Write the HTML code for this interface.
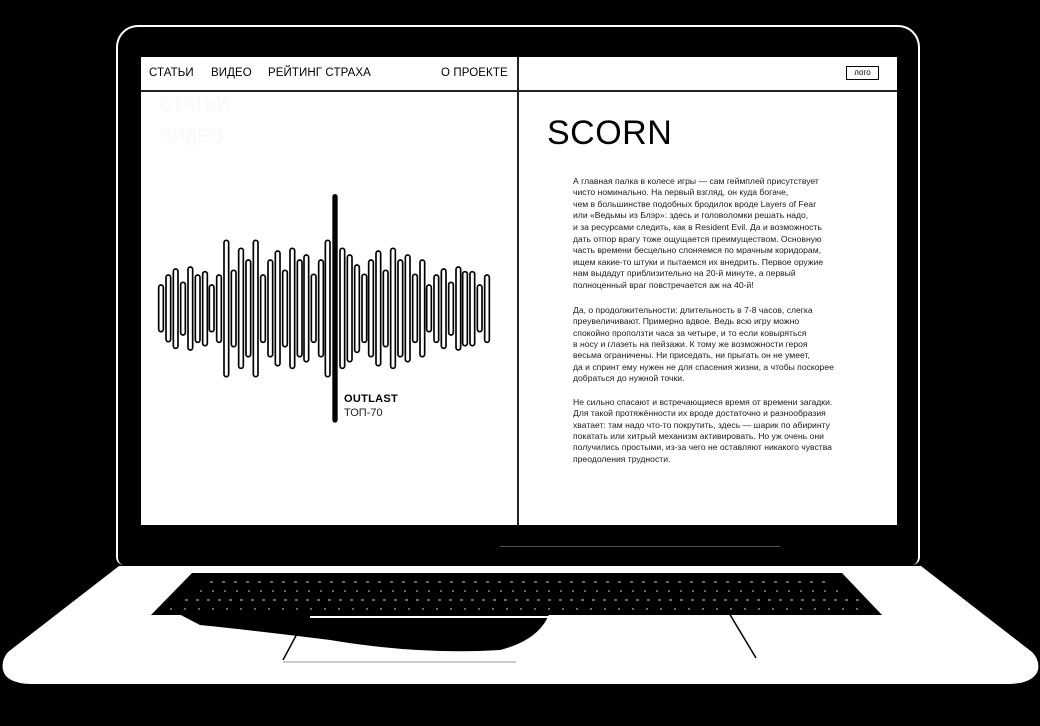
<!DOCTYPE html>
<html><head><meta charset="utf-8"><style>
html,body{margin:0;padding:0;background:#000;}
body{width:1040px;height:726px;position:relative;overflow:hidden;font-family:"Liberation Sans","DejaVu Sans",sans-serif;}
.a{position:absolute;}
.lid{left:116px;top:25px;width:800px;height:538px;border:2px solid #fff;border-radius:22px 22px 8px 8px;border-bottom:none;}
.screen{left:141px;top:57px;width:756px;height:468px;background:#fff;}
.nav{font-size:11.5px;color:#000;top:67px;letter-spacing:0.1px;}
.t{position:absolute;left:573px;font-size:8.6px;color:#1a1a1a;white-space:nowrap;line-height:10px;}
</style></head><body>
<div class="a lid"></div>
<div class="a screen"></div>
<div class="a" style="left:141px;top:90px;width:756px;height:2px;background:#222"></div>
<div class="a" style="left:517px;top:57px;width:2px;height:468px;background:#222"></div>
<div class="a nav" style="left:149px">СТАТЬИ</div>
<div class="a nav" style="left:211px">ВИДЕО</div>
<div class="a nav" style="left:268px">РЕЙТИНГ СТРАХА</div>
<div class="a nav" style="left:441px">О ПРОЕКТЕ</div>
<div class="a" style="left:846px;top:66px;width:31px;height:12px;border:1.5px solid #000;font-size:8px;text-align:center;line-height:12px">лого</div>
<div class="a" style="left:160px;top:94px;font-size:18px;color:#f8f8f8">СТАТЬИ</div>
<div class="a" style="left:160px;top:126px;font-size:18px;color:#f8f8f8">ВИДЕО</div>
<div class="a" style="left:547px;top:114px;font-size:34px;color:#000;letter-spacing:0.5px">SCORN</div>

<svg class="a" style="left:140px;top:180px" width="380" height="260" viewBox="0 0 1140 780">
<g fill="#fff" stroke="#000" stroke-width="5">
<rect x="56" y="315" width="14" height="140" rx="7"/>
<rect x="78" y="285" width="14" height="200" rx="7"/>
<rect x="100" y="267" width="14" height="238" rx="7"/>
<rect x="122" y="307" width="14" height="158" rx="7"/>
<rect x="144" y="261" width="14" height="249" rx="7"/>
<rect x="166" y="285" width="14" height="202" rx="7"/>
<rect x="188" y="275" width="14" height="222" rx="7"/>
<rect x="208" y="315" width="14" height="140" rx="7"/>
<rect x="230" y="285" width="14" height="202" rx="7"/>
<rect x="252" y="181" width="14" height="409" rx="7"/>
<rect x="274" y="271" width="14" height="229" rx="7"/>
<rect x="296" y="205" width="14" height="360" rx="7"/>
<rect x="318" y="240" width="14" height="290" rx="7"/>
<rect x="340" y="181" width="14" height="409" rx="7"/>
<rect x="362" y="285" width="14" height="202" rx="7"/>
<rect x="384" y="240" width="14" height="290" rx="7"/>
<rect x="406" y="213" width="14" height="344" rx="7"/>
<rect x="428" y="271" width="14" height="229" rx="7"/>
<rect x="450" y="205" width="14" height="360" rx="7"/>
<rect x="472" y="240" width="14" height="290" rx="7"/>
<rect x="492" y="225" width="14" height="320" rx="7"/>
<rect x="514" y="283" width="14" height="204" rx="7"/>
<rect x="536" y="240" width="14" height="290" rx="7"/>
<rect x="556" y="181" width="14" height="409" rx="7"/>
<rect x="600" y="205" width="14" height="360" rx="7"/>
<rect x="622" y="225" width="14" height="320" rx="7"/>
<rect x="644" y="255" width="14" height="262" rx="7"/>
<rect x="666" y="283" width="14" height="204" rx="7"/>
<rect x="686" y="240" width="14" height="290" rx="7"/>
<rect x="708" y="213" width="14" height="344" rx="7"/>
<rect x="730" y="271" width="14" height="229" rx="7"/>
<rect x="752" y="205" width="14" height="360" rx="7"/>
<rect x="774" y="240" width="14" height="290" rx="7"/>
<rect x="796" y="225" width="14" height="320" rx="7"/>
<rect x="818" y="283" width="14" height="204" rx="7"/>
<rect x="840" y="240" width="14" height="290" rx="7"/>
<rect x="860" y="315" width="14" height="140" rx="7"/>
<rect x="882" y="285" width="14" height="202" rx="7"/>
<rect x="904" y="267" width="14" height="238" rx="7"/>
<rect x="926" y="307" width="14" height="158" rx="7"/>
<rect x="948" y="261" width="14" height="249" rx="7"/>
<rect x="968" y="275" width="14" height="222" rx="7"/>
<rect x="990" y="275" width="14" height="222" rx="7"/>
<rect x="1012" y="315" width="14" height="140" rx="7"/>
<rect x="1034" y="285" width="14" height="202" rx="7"/>
</g>
<line x1="585" y1="50" x2="585" y2="720" stroke="#000" stroke-width="16" stroke-linecap="round"/>
</svg>
<div class="a" style="left:344px;top:393px;font-size:11px;font-weight:bold;letter-spacing:0.3px">OUTLAST</div>
<div class="a" style="left:344px;top:407px;font-size:11px;color:#222">ТОП-70</div>

<div class="t" style="top:175.5px">А главная палка в колесе игры — сам геймплей присутствует</div>
<div class="t" style="top:187.1px">чисто номинально. На первый взгляд, он куда богаче,</div>
<div class="t" style="top:198.7px">чем в большинстве подобных бродилок вроде Layers of Fear</div>
<div class="t" style="top:210.3px">или «Ведьмы из Блэр»: здесь и головоломки решать надо,</div>
<div class="t" style="top:221.9px">и за ресурсами следить, как в Resident Evil. Да и возможность</div>
<div class="t" style="top:233.5px">дать отпор врагу тоже ощущается преимуществом. Основную</div>
<div class="t" style="top:245.1px">часть времени бесцельно слоняемся по мрачным коридорам,</div>
<div class="t" style="top:256.7px">ищем какие-то штуки и пытаемся их внедрить. Первое оружие</div>
<div class="t" style="top:268.3px">нам выдадут приблизительно на 20-й минуте, а первый</div>
<div class="t" style="top:279.9px">полноценный враг повстречается аж на 40-й!</div>

<div class="t" style="top:305px">Да, о продолжительности: длительность в 7-8 часов, слегка</div>
<div class="t" style="top:316.3px">преувеличивают. Примерно вдвое. Ведь всю игру можно</div>
<div class="t" style="top:327.6px">спокойно проползти часа за четыре, и то если ковыряться</div>
<div class="t" style="top:338.9px">в носу и глазеть на пейзажи. К тому же возможности героя</div>
<div class="t" style="top:350.2px">весьма ограничены. Ни приседать, ни прыгать он не умеет,</div>
<div class="t" style="top:361.5px">да и спринт ему нужен не для спасения жизни, а чтобы поскорее</div>
<div class="t" style="top:372.8px">добраться до нужной точки.</div>

<div class="t" style="top:397px">Не сильно спасают и встречающиеся время от времени загадки.</div>
<div class="t" style="top:408.3px">Для такой протяжённости их вроде достаточно и разнообразия</div>
<div class="t" style="top:419.6px">хватает: там надо что-то покрутить, здесь — шарик по абиринту</div>
<div class="t" style="top:430.9px">покатать или хитрый механизм активировать. Но уж очень они</div>
<div class="t" style="top:442.2px">получились простыми, из-за чего не оставляют никакого чувства</div>
<div class="t" style="top:453.5px">преодоления трудности.</div>

<div class="a" style="left:500px;top:546px;width:280px;height:1px;background:#555"></div>

<svg class="a" style="left:0;top:560px" width="1040" height="166" viewBox="0 560 1040 166">
<path d="M119,566 L921,566 L1032,652 Q1040,660 1038,670 Q1034,683 1010,684 L30,684 Q6,683 3,670 Q1,660 8,652 Z" fill="#fff"/>
<path d="M192,573 L842,573 L882,615 L151,615 Z" fill="#000"/>
<path d="M175,612 L550,612 Q540,640 500,650 Q420,655 330,640 Q250,630 200,625 Z" fill="#000"/>
<g stroke="#fff" stroke-width="1" opacity="0.8">
<line x1="210" y1="582" x2="830" y2="582" stroke-dasharray="3 9"/>
<line x1="200" y1="591" x2="845" y2="591" stroke-dasharray="2 10"/>
<line x1="185" y1="600" x2="860" y2="600" stroke-dasharray="3 8"/>
<line x1="170" y1="609" x2="870" y2="609" stroke-dasharray="2 12"/>
</g>
<line x1="310" y1="617" x2="720" y2="617" stroke="#fff" stroke-width="2"/>
<line x1="298" y1="632" x2="283" y2="660" stroke="#000" stroke-width="1.5"/>
<line x1="729" y1="613" x2="756" y2="658" stroke="#000" stroke-width="1.5"/>
<line x1="283" y1="662" x2="516" y2="662" stroke="#999" stroke-width="1"/>
</svg>
</body></html>
